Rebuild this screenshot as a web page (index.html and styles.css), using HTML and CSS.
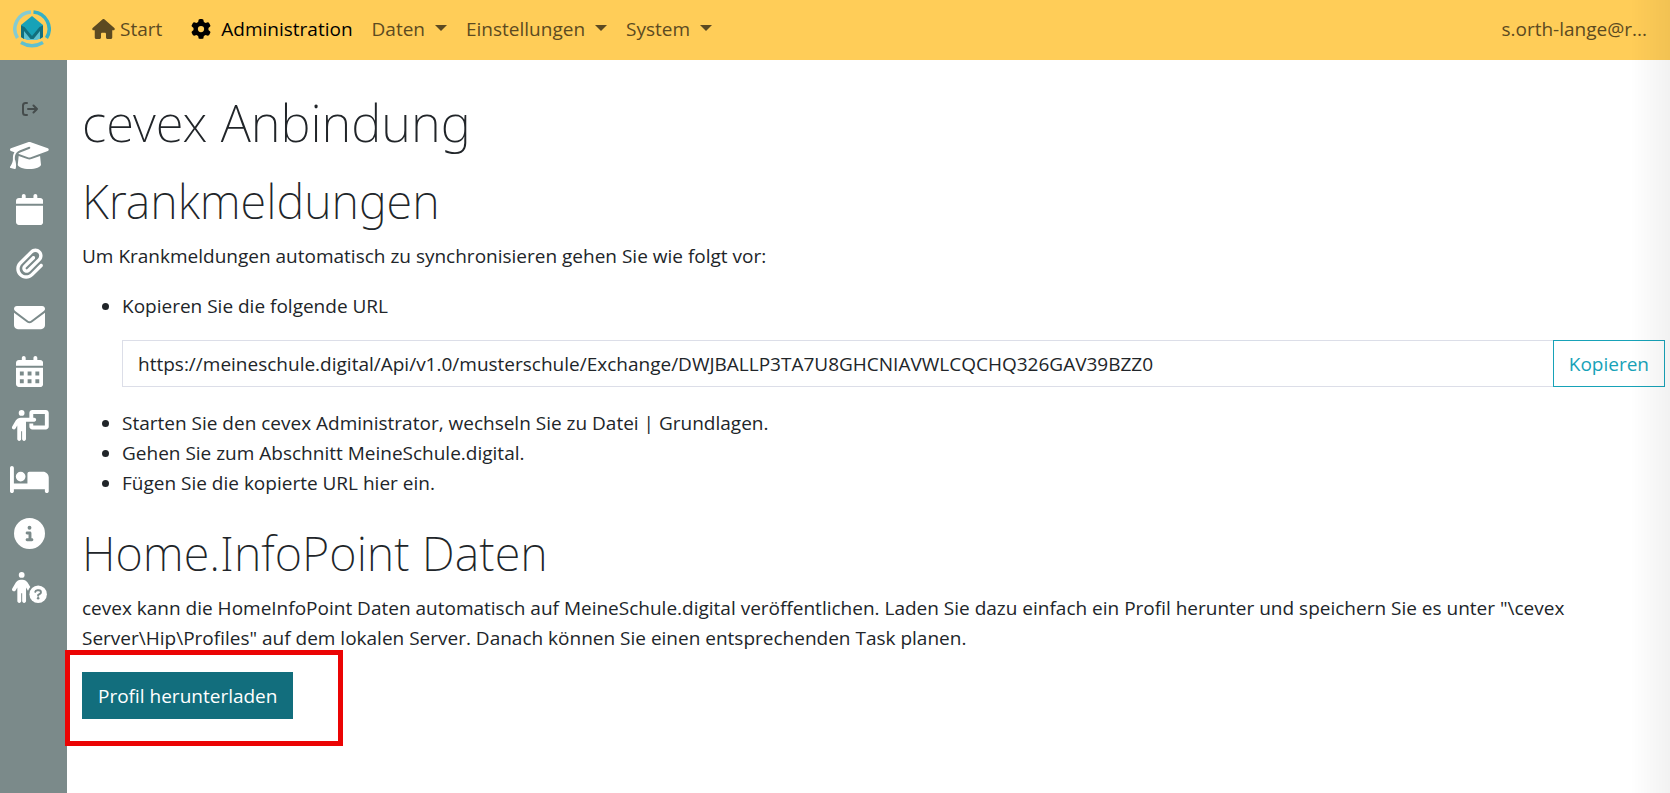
FILE: index.html
```html
<!DOCTYPE html>
<html lang="de">
<head>
<meta charset="utf-8">
<title>cevex Anbindung</title>
<link rel="stylesheet" href="styles.css">
</head>
<body>
<header class="topbar">
  <a class="brand" href="#" aria-label="MeineSchule.digital">
    <svg viewBox="0 0 38 38" width="38" height="38">
      <g fill="none" stroke-width="3.500">
        <path d="M18 2A17 17 0 0 0 4.500 28" stroke="#85cbd2"/>
        <path d="M20.500 2A17 17 0 0 1 33.500 28" stroke="#35b0c6"/>
        <path d="M8 32.500Q19 39 30 32.500" stroke="#5fc0d0"/>
      </g>
      <path d="M19 6 30 15v12l-4 2H12l-4-2V15z" fill="#17a2b8"/>
      <path d="M10 19 19 29 28 19v9l-4 2H14l-4-2z" fill="#5fc0d0"/>
      <path d="M8 15.500 11.500 17 19 26 26.500 17 30 15.500V27l-3 2v-8l-6.500 8h-3L11 21v8l-3-2z" fill="#126e7d"/>
    </svg>
  </a>
  <nav class="menu" aria-label="Hauptmenü">
    <a class="menu-link menu-start" href="#"><svg viewBox="0 0 576 512" width="23" height="20"><path d="M575.8 255.500c0 18-15 32.100-32 32.100h-32l.7 160.200c0 2.700-.2 5.400-.5 8.100V472c0 22.100-17.900 40-40 40H392c-22.100 0-40-17.900-40-40V384c0-17.700-14.300-32-32-32H256c-17.700 0-32 14.300-32 32v88c0 22.100-17.900 40-40 40H104c-22.100 0-40-17.900-40-40V287.600H32c-18 0-32-14-32-32.100c0-9 3-17 10-24L266.400 8c7-7 15-8 22-8s15 2 21 7L564.800 231.500c8 7 12 15 11 24z"/></svg>Start</a>
    <a class="menu-link menu-admin" href="#"><svg viewBox="0 0 512 512" width="20" height="20"><path d="M495.900 166.600c3.200 8.700 .5 18.400-6.400 24.600l-43.300 39.400c1.100 8.300 1.700 16.800 1.700 25.400s-.6 17.100-1.700 25.400l43.300 39.400c6.900 6.200 9.600 15.900 6.400 24.600c-4.400 11.900-9.700 23.300-15.800 34.300l-4.700 8.100c-6.600 11-14 21.400-22.100 31.200c-5.900 7.200-15.700 9.600-24.500 6.800l-55.700-17.700c-13.400 10.300-28.200 18.900-44 25.400l-12.500 57.100c-2 9.100-9 16.300-18.200 17.800c-13.800 2.300-28 3.500-42.500 3.500s-28.700-1.200-42.500-3.500c-9.200-1.500-16.200-8.700-18.200-17.800l-12.500-57.100c-15.800-6.500-30.600-15.100-44-25.400L83.100 425.900c-8.800 2.800-18.600 .3-24.500-6.800c-8.100-9.800-15.500-20.200-22.100-31.200l-4.700-8.100c-6.100-11-11.400-22.400-15.800-34.300c-3.200-8.700-.5-18.400 6.400-24.600l43.300-39.400C64.600 273.100 64 264.600 64 256s.6-17.100 1.700-25.400L22.400 191.200c-6.900-6.200-9.600-15.900-6.400-24.600c4.400-11.900 9.700-23.300 15.800-34.300l4.700-8.100c6.600-11 14-21.400 22.100-31.200c5.900-7.200 15.700-9.600 24.500-6.800l55.700 17.700c13.400-10.300 28.200-18.900 44-25.400l12.500-57.100c2-9.100 9-16.300 18.200-17.800C227.300 1.200 241.500 0 256 0s28.700 1.200 42.500 3.500c9.200 1.500 16.200 8.700 18.200 17.800l12.500 57.100c15.800 6.500 30.600 15.100 44 25.400l55.700-17.700c8.800-2.800 18.600-.3 24.500 6.800c8.100 9.800 15.500 20.200 22.100 31.200l4.700 8.100c6.100 11 11.400 22.400 15.800 34.300zM256 336a80 80 0 1 0 0-160 80 80 0 1 0 0 160z"/></svg>Administration</a>
    <button class="menu-link menu-drop" type="button">Daten</button>
    <button class="menu-link menu-drop" type="button">Einstellungen</button>
    <button class="menu-link menu-drop" type="button">System</button>
  </nav>
  <a class="menu-link account" href="#">s.orth-lange@r...</a>
</header>
<div class="shell">
  <nav class="sidebar" aria-label="Bereiche">
    <a class="side-link side-exit" href="#" aria-label="Menü ausklappen"><svg viewBox="0 0 16 14" width="16" height="14" fill="none" stroke="#454c4c" stroke-width="2" stroke-linecap="round" stroke-linejoin="round"><path d="M5 1H3.500Q1 1 1 3.500v7Q1 13 3.500 13H5M6 7h9M11.500 3.500 15 7l-3.500 3.500"/></svg></a>
    <a class="side-link" href="#" aria-label="Schule"><svg viewBox="0 0 640 512"><path d="M320 32c-8.100 0-16.100 1.400-23.700 4.100L15.800 137.400C6.300 140.900 0 149.900 0 160s6.300 19.100 15.800 22.600l57.900 20.900C57.300 229.300 48 259.800 48 291.900v28.100c0 28.400-10.800 57.700-22.300 80.800c-6.500 13-13.900 25.800-22.500 37.600C0 442.700-.9 448.300 .9 453.400s6 8.900 11.200 10.200l64 16c4.200 1.100 8.700 .3 12.400-2s6.300-6.100 7.100-10.400c8.600-42.800 4.300-81.200-2.100-108.700C90.300 344.300 86 329.800 80 316.500V291.900c0-30.200 10.200-58.700 27.900-81.500c12.900-15.500 29.600-28 49.200-35.700l157-61.700c8.200-3.200 17.500 .8 20.700 9s-.8 17.500-9 20.700l-157 61.700c-12.400 4.900-23.300 12.400-32.200 21.600l159.600 57.600c7.600 2.700 15.600 4.100 23.700 4.100s16.100-1.400 23.700-4.100L624.200 182.600c9.500-3.400 15.800-12.500 15.800-22.600s-6.300-19.100-15.800-22.600L343.700 36.100C336.100 33.400 328.100 32 320 32zM128 408c0 35.300 86 72 192 72s192-36.700 192-72L496.700 262.600 354.500 314c-11.100 4-22.800 6-34.500 6s-23.500-2-34.500-6L143.300 262.600 128 408z"/></svg></a>
    <a class="side-link" href="#" aria-label="Kalender"><svg viewBox="0 0 448 512"><path d="M96 32V64H48C21.500 64 0 85.500 0 112v48H448V112c0-26.500-21.500-48-48-48H352V32c0-17.700-14.300-32-32-32s-32 14.300-32 32V64H160V32c0-17.700-14.300-32-32-32S96 14.300 96 32zM448 192H0V464c0 26.500 21.500 48 48 48H400c26.500 0 48-21.500 48-48V192z"/></svg></a>
    <a class="side-link" href="#" aria-label="Anhänge"><svg viewBox="0 0 448 512"><path d="M364.200 83.800c-24.400-24.400-64-24.400-88.400 0l-184 184c-42.100 42.100-42.100 110.300 0 152.400s110.300 42.100 152.400 0l152-152c10.900-10.900 28.700-10.900 39.600 0s10.900 28.700 0 39.600l-152 152c-64 64-167.600 64-231.600 0s-64-167.600 0-231.600l184-184c46.300-46.300 121.300-46.300 167.600 0s46.300 121.300 0 167.600l-176 176c-28.600 28.600-75 28.600-103.600 0s-28.600-75 0-103.600l144-144c10.900-10.900 28.700-10.900 39.600 0s10.900 28.700 0 39.600l-144 144c-6.700 6.700-6.700 17.700 0 24.400s17.700 6.700 24.400 0l176-176c24.400-24.400 24.400-64 0-88.400z"/></svg></a>
    <a class="side-link" href="#" aria-label="Nachrichten"><svg viewBox="0 0 512 512"><path d="M48 64C21.500 64 0 85.500 0 112c0 15.100 7.100 29.300 19.200 38.400L236.800 313.600c11.400 8.500 27 8.500 38.400 0L492.800 150.400c12.100-9.100 19.200-23.300 19.200-38.400c0-26.500-21.500-48-48-48H48zM0 176V384c0 35.300 28.700 64 64 64H448c35.300 0 64-28.700 64-64V176L294.400 339.200c-22.800 17.100-54 17.100-76.800 0L0 176z"/></svg></a>
    <a class="side-link" href="#" aria-label="Termine"><svg viewBox="0 0 448 512"><path fill-rule="evenodd" d="M96 32V64H48C21.500 64 0 85.500 0 112v48H448V112c0-26.500-21.500-48-48-48H352V32c0-17.700-14.300-32-32-32s-32 14.300-32 32V64H160V32c0-17.700-14.300-32-32-32S96 14.300 96 32zM448 192H0V464c0 26.500 21.500 48 48 48H400c26.500 0 48-21.500 48-48V192zM64 256h64v64H64zM192 256h64v64h-64zM320 256h64v64h-64zM64 384h64v64H64zM192 384h64v64h-64zM320 384h64v64h-64z"/></svg></a>
    <a class="side-link" href="#" aria-label="Unterricht"><svg viewBox="0 0 640 512"><path d="M192 96a48 48 0 1 0 0-96 48 48 0 1 0 0 96zm-8 384V352h16V480c0 17.700 14.300 32 32 32s32-14.300 32-32V192h56 64 16c17.700 0 32-14.300 32-32s-14.300-32-32-32H384V64H576V256H384V224H320v48c0 26.500 21.500 48 48 48H592c26.500 0 48-21.500 48-48V48c0-26.500-21.500-48-48-48H368c-26.500 0-48 21.500-48 48v80H243.100 177.100c-33.700 0-64.900 17.700-82.300 46.600l-58.300 97c-9.100 15.100-4.200 34.800 10.900 43.900s34.800 4.200 43.900-10.900L120 256.900V480c0 17.700 14.300 32 32 32s32-14.300 32-32z"/></svg></a>
    <a class="side-link" href="#" aria-label="Krankmeldungen"><svg viewBox="0 0 640 512"><path d="M32 32c17.700 0 32 14.300 32 32V320H288V160c0-17.700 14.300-32 32-32H544c53 0 96 43 96 96V448c0 17.700-14.300 32-32 32s-32-14.300-32-32V416H64v32c0 17.700-14.300 32-32 32s-32-14.300-32-32V64C0 46.300 14.300 32 32 32zm144 96a80 80 0 1 1 0 160 80 80 0 1 1 0-160z"/></svg></a>
    <a class="side-link" href="#" aria-label="Information"><svg viewBox="0 0 512 512"><path d="M256 512A256 256 0 1 0 256 0a256 256 0 1 0 0 512zM216 336h24V272H216c-13.300 0-24-10.700-24-24s10.700-24 24-24h48c13.300 0 24 10.700 24 24v88h8c13.300 0 24 10.700 24 24s-10.700 24-24 24H216c-13.300 0-24-10.700-24-24s10.700-24 24-24zm40-208a32 32 0 1 1 0 64 32 32 0 1 1 0-64z"/></svg></a>
    <a class="side-link" href="#" aria-label="Hilfe"><svg viewBox="0 0 576 512"><path d="M208 48a48 48 0 1 1-96 0 48 48 0 1 1 96 0zM152 352V480c0 17.700-14.300 32-32 32s-32-14.300-32-32V256.900L59.400 304.500c-9.100 15.100-28.800 20-43.900 10.900s-20-28.800-10.900-43.900l58.300-97c17.400-28.900 48.600-46.600 82.300-46.600h29.700c33.700 0 64.900 17.700 82.300 46.600l44.900 74.700c-16.100 17.600-28.600 38.500-36.600 61.500c-1.900-1.800-3.500-3.900-4.900-6.300L232 256.900V480c0 17.700-14.300 32-32 32s-32-14.300-32-32V352H152z"/><circle cx="432" cy="368" r="144"/><path d="M384 328q4-28 36-28h22q36 0 36 34 0 18-18 28l-28 17v12" fill="none" stroke="#7b8a8a" stroke-width="32" stroke-linecap="round"/><circle cx="432" cy="434" r="21" fill="#7b8a8a"/></svg></a>
  </nav>
  <main class="content">
    <h1 class="title">cevex Anbindung</h1>
    <section class="section">
      <h2 class="subtitle">Krankmeldungen</h2>
      <p class="text">Um Krankmeldungen automatisch zu synchronisieren gehen Sie wie folgt vor:</p>
      <ul class="steps">
        <li><label for="url">Kopieren Sie die folgende URL</label>
          <div class="copy-row">
            <input class="copy-input" id="url" type="text" readonly value="https://meineschule.digital/Api/v1.0/musterschule/Exchange/DWJBALLP3TA7U8GHCNIAVWLCQCHQ326GAV39BZZ0">
            <button class="btn btn-outline" type="button">Kopieren</button>
          </div>
        </li>
        <li>Starten Sie den cevex Administrator, wechseln Sie zu Datei | Grundlagen.</li>
        <li>Gehen Sie zum Abschnitt MeineSchule.digital.</li>
        <li>Fügen Sie die kopierte URL hier ein.</li>
      </ul>
    </section>
    <section class="section">
      <h2 class="subtitle">Home.InfoPoint Daten</h2>
      <p class="text text-wide">cevex kann die HomeInfoPoint Daten automatisch auf MeineSchule.digital veröffentlichen. Laden Sie dazu einfach ein Profil herunter und speichern Sie es unter "\cevex Server\Hip\Profiles" auf dem lokalen Server. Danach können Sie einen entsprechenden Task planen.</p>
      <div class="download">
        <button class="btn btn-primary" type="button">Profil herunterladen</button>
        <span class="marker"></span>
      </div>
    </section>
  </main>
</div>
</body>
</html>
```
FILE: styles.css
```css
* { box-sizing: border-box; }

body {
  margin: 0;
  min-height: 100vh;
  display: flex;
  flex-direction: column;
  background: #fff;
  color: #212529;
  font: 19px/30px "Open Sans", "Noto Sans", sans-serif;
}

body::after {
  content: "";
  position: fixed;
  inset: 0 0 0 auto;
  width: 40px;
  background: linear-gradient(to right, rgba(0, 0, 0, 0), rgba(0, 0, 0, .05));
  pointer-events: none;
}

button, input { font: inherit; }

.topbar {
  display: flex;
  align-items: center;
  height: 60px;
  padding: 0 23px 2px 13px;
  background: #ffcd58;
}

.brand { display: flex; margin-right: 41px; }

.menu { display: flex; align-items: center; gap: 19px; flex: 1; }

.menu-link {
  display: flex;
  align-items: center;
  padding: 0;
  border: 0;
  background: none;
  color: #5c4a21;
  text-decoration: none;
}

.menu-link svg { fill: currentColor; }
.menu-start { gap: 5px; margin-right: 10px; }
.menu-admin { gap: 10px; color: #000; }

.menu-drop::after {
  content: "";
  margin-left: 10px;
  margin-bottom: 2px;
  border: 6px solid transparent;
  border-top-color: currentColor;
  border-bottom: 0;
}

.shell { display: flex; flex: 1; }

.sidebar {
  display: flex;
  flex-direction: column;
  flex: none;
  width: 67px;
  padding: 29px 8px 0 0;
  background: #7b8a8a;
}

.side-link {
  display: flex;
  align-items: center;
  justify-content: center;
  height: 54px;
}

.side-link svg { height: 31px; fill: #fff; }
.side-exit { height: 39px; }
.side-exit svg { height: 14px; fill: none; }

.content { flex: 1; min-width: 0; padding: 30px 5px 30px 15px; }

.title, .subtitle {
  margin: 0 0 10px;
  font-family: "Noto Sans", "Open Sans", sans-serif;
  font-weight: 200;
}
.title { margin-bottom: 17px; font-size: 51px; line-height: 64px; }
.subtitle { font-size: 47px; line-height: 60px; }

.text { margin: 0 0 19px; }
.text-wide { max-width: 1500px; }

.steps { margin: 0 0 25px; padding: 1px 0 0 40px; }

.copy-row { display: flex; margin: 19px 0 21px; }

.copy-input {
  flex: 1;
  min-width: 0;
  height: 47px;
  padding: 0 15px;
  border: 1px solid #dcdee8;
  border-right: 0;
  border-radius: 0;
  background: #fff;
  color: inherit;
}

.btn { height: 47px; padding: 0 15px; border: 1px solid; }
.btn-outline { border-color: #17a2b8; background: #fff; color: #17a2b8; }
.btn-primary { border-color: #126e7d; background: #126e7d; color: #fff; }

.download { position: relative; width: fit-content; }

.marker {
  position: absolute;
  inset: -22px -50px -27px -17px;
  border: 5px solid #eb0404;
  pointer-events: none;
}
```
